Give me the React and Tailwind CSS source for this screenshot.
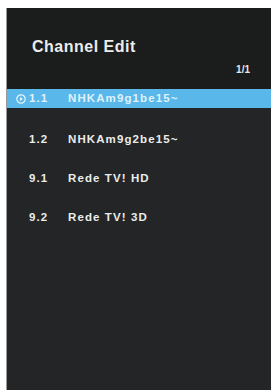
import React from 'react';

const rows = [
	{ num: '1.2', name: 'NHKAm9g2be15~' },
	{ num: '9.1', name: 'Rede TV! HD' },
	{ num: '9.2', name: 'Rede TV! 3D' },
];

const App = () => {
	return (
		<div className="w-[276px] h-[392px] bg-white pt-[8px] pl-[6px] pr-[5px] pb-[2px]" style={{ fontFamily: '"Liberation Sans", Arial, sans-serif' }}>
			<div className="h-full flex flex-col bg-[#232526] border-l border-[#9a9a9a]">
				{/* Header */}
				<div className="h-[81px] bg-[#1b1c1c] flex flex-col pl-[25px] pr-[21px]">
					<div className="mt-[29px] text-[16px] leading-[19px] font-bold tracking-[0.5px] text-[#ececec]">Channel Edit</div>
					<div className="mt-[8px] self-end text-[10px] leading-[12px] font-bold text-[#e6e6e6]">1/1</div>
				</div>
				{/* Selected row */}
				<div className="h-[19px] bg-[#5ab7e9] flex items-center pl-[9px] text-[11.5px] font-bold tracking-[1.1px] text-[#dff2fc]">
					<svg width="10" height="10" viewBox="0 0 10 10" className="mr-[3px]">
						<circle cx="5" cy="5" r="4.2" fill="none" stroke="#e4f4fd" strokeWidth="1.2" />
						<path d="M4 3 L7 5 L4 7 Z" fill="#e4f4fd" />
					</svg>
					<span className="w-[39px]">1.1</span>
					<span>NHKAm9g1be15~</span>
				</div>
				{/* Other rows */}
				<div className="mt-[12px] flex flex-col">
					{rows.map((row) => (
						<div key={row.num} className="h-[39px] flex items-center pl-[22px] text-[11.5px] font-bold tracking-[1.1px] text-[#ececec]">
							<span className="w-[39px]">{row.num}</span>
							<span>{row.name}</span>
						</div>
					))}
				</div>
			</div>
		</div>
	);
};

export default App;
